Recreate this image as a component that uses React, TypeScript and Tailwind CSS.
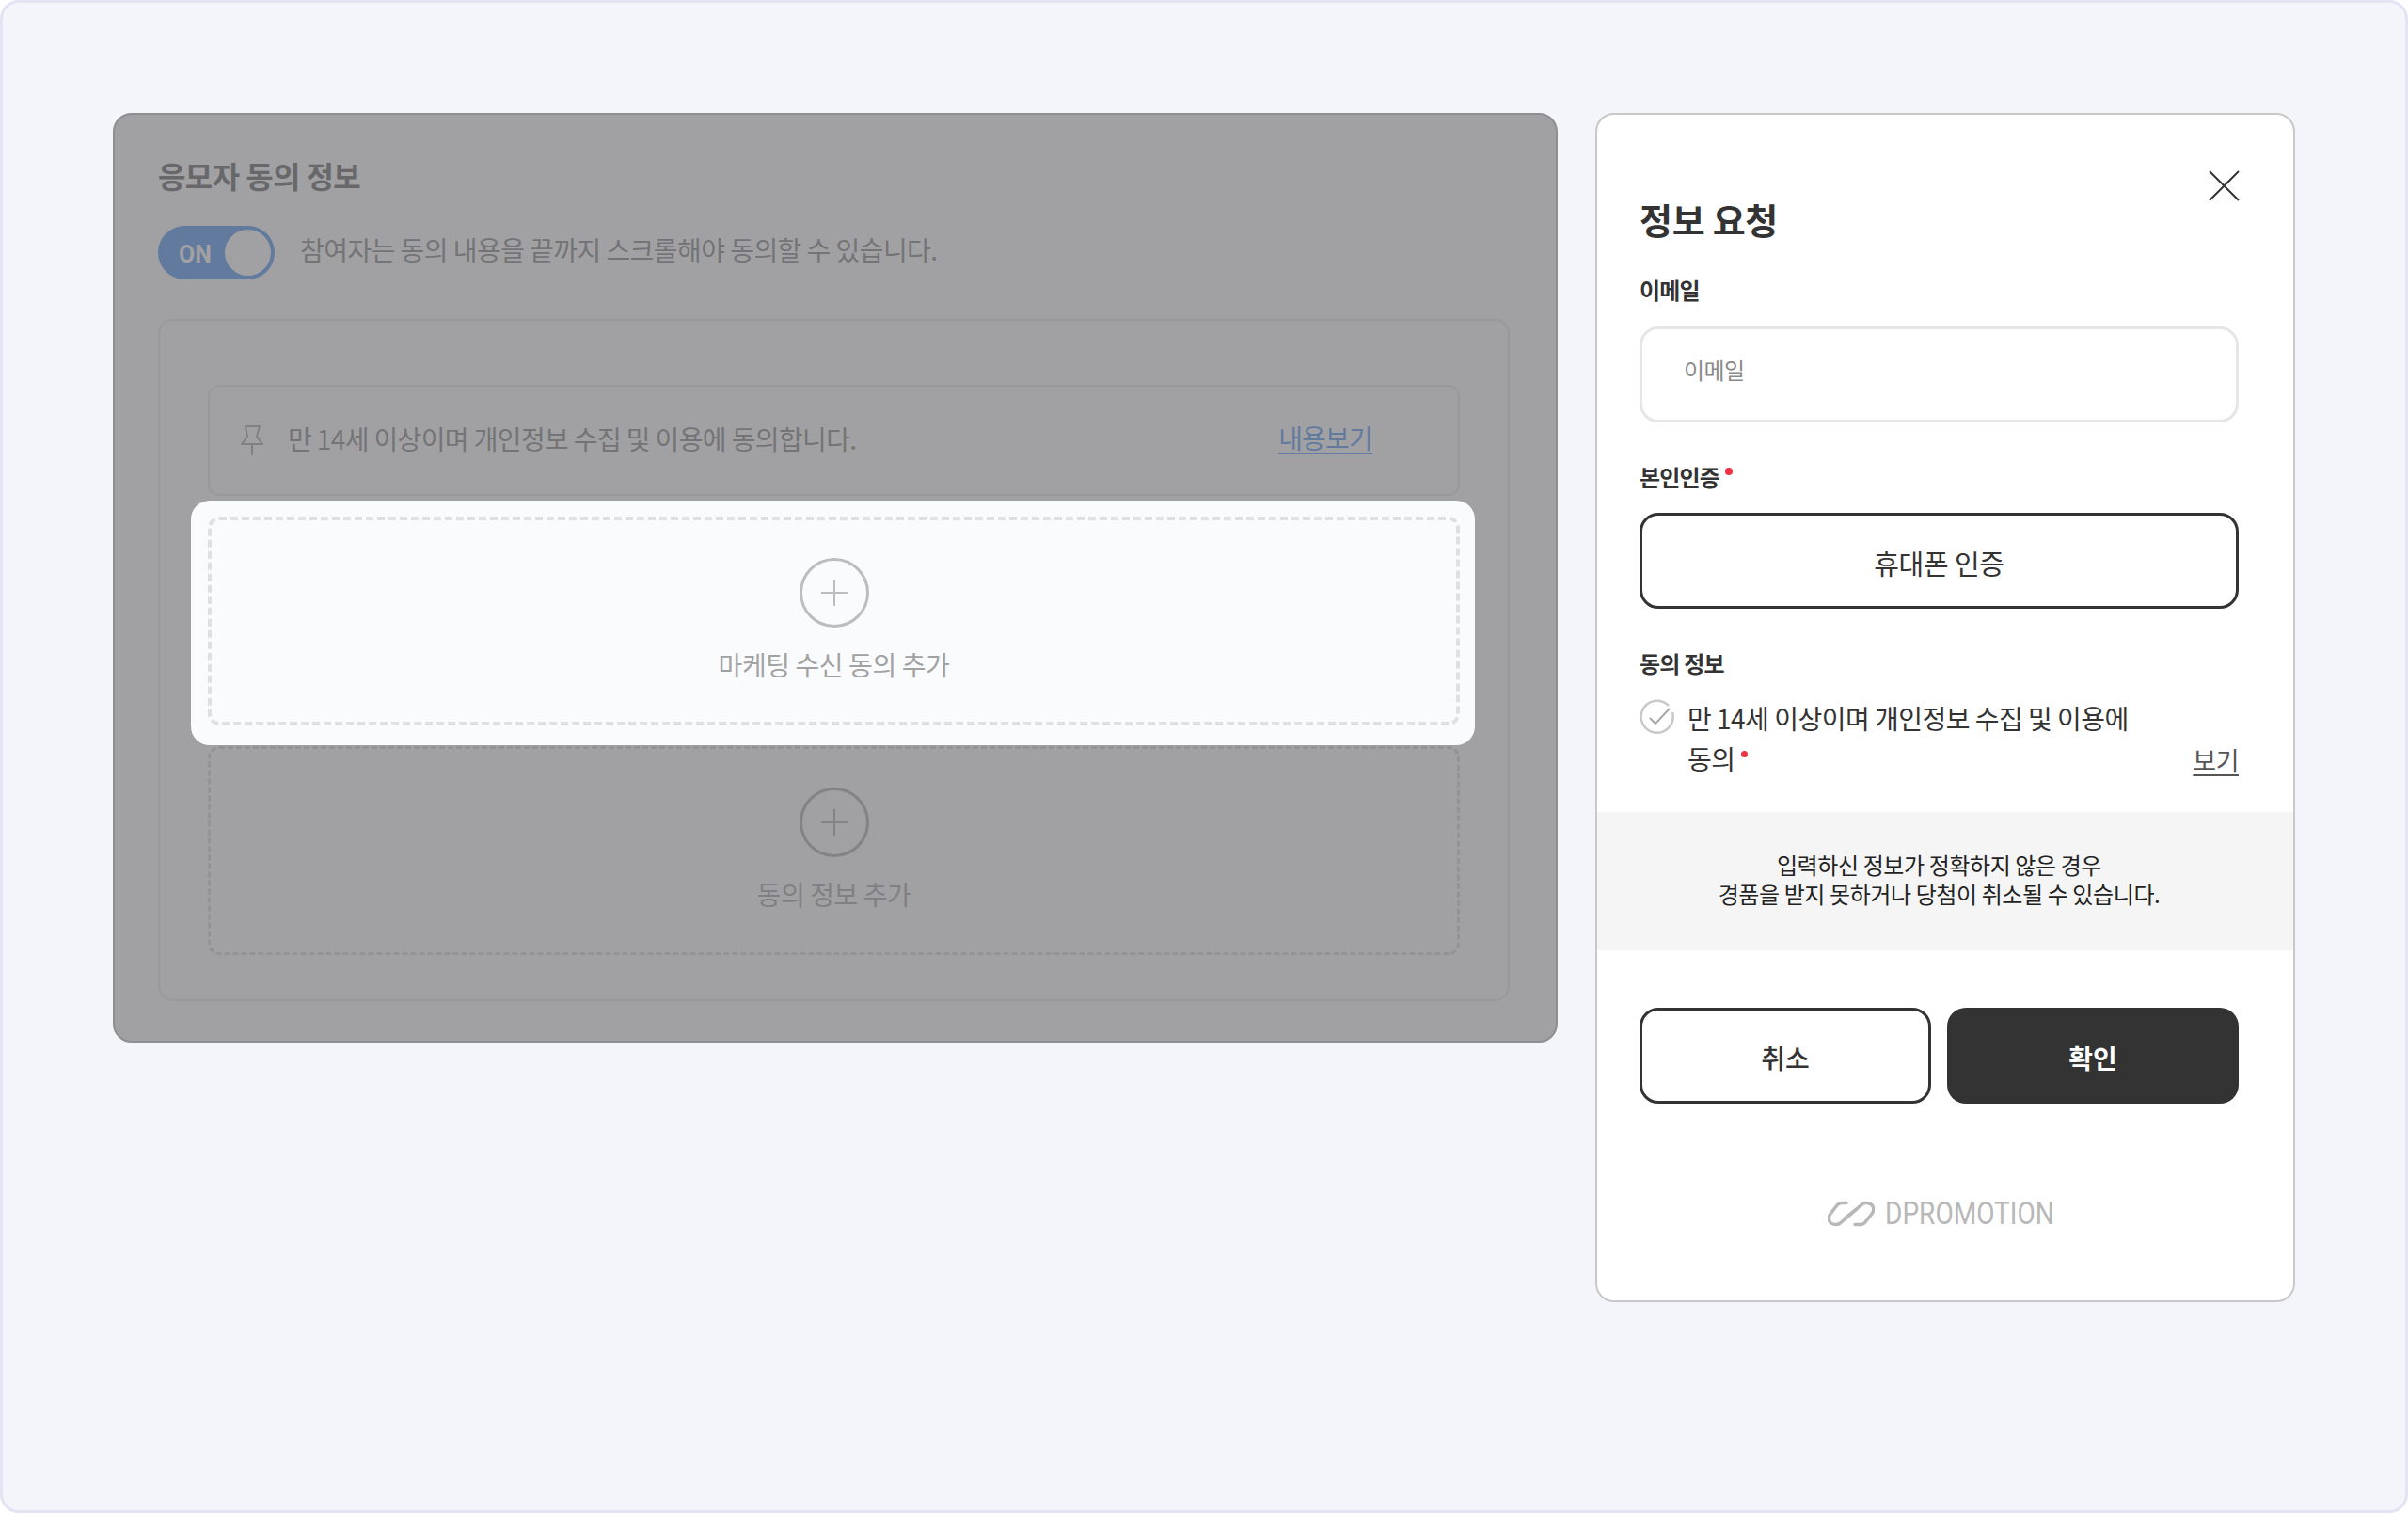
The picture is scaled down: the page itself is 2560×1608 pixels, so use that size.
export default function App() {
  return (
    <div className="box-border flex h-[1608px] w-[2560px] items-start gap-[40px] rounded-[20px] border-[3px] border-[#e2e3f3] bg-[#f3f5fa] pl-[117px] pt-[117px] font-['Noto_Sans_CJK_KR','Noto_Sans',sans-serif]">
      <LeftPanel />
      <RightPanel />
    </div>
  );
}

function AddBox({ label, dim }: { label: string; dim?: boolean }) {
  const stroke = dim ? "#838385" : "#bdbdbd";
  return (
    <div className={dim
      ? "flex h-[222px] flex-col items-center rounded-[12px] border-[3px] border-dashed border-[#939395] pt-[41px]"
      : "relative z-10 flex h-[222px] flex-col items-center rounded-[12px] border-[4px] border-dashed border-[#e0e0e0] pt-[40px]"}>
      <svg width="74" height="74" viewBox="0 0 74 74" fill="none">
        <circle cx="37" cy="37" r="35.5" stroke={stroke} strokeWidth="3" />
        <path d="M37 23V51M23 37H51" stroke={stroke} strokeWidth="2" />
      </svg>
      <span className={dim
        ? "mt-[19px] text-[28px] leading-[40px] tracking-[-0.4px] text-[#808082]"
        : "mt-[19px] text-[28px] leading-[40px] tracking-[-0.4px] text-[#a2a2a2]"}>{label}</span>
    </div>
  );
}

function LeftPanel() {
  return (
    <section className="box-border h-[988px] w-[1536px] shrink-0 rounded-[20px] border-2 border-[#8f8f91] bg-[#a1a1a3] pl-[46px] pr-[49px] pt-[40px]">
      <h2 className="text-[32px] font-bold leading-[48px] tracking-[-0.6px] text-[#68686a]">응모자 동의 정보</h2>
      <div className="mt-[30px] flex h-[57px] items-center gap-[27px]">
        <div className="flex h-[57px] w-[124px] items-center justify-between rounded-full bg-[#637a9f] pl-[22px] pr-[4px]">
          <span className="mt-[4px] font-['Roboto',sans-serif] text-[25px] font-bold text-[#a1a1a3]">ON</span>
          <span className="h-[49px] w-[49px] rounded-full bg-[#a1a1a3]" />
        </div>
        <p className="-mt-[8px] text-[28px] leading-[40px] tracking-[-0.55px] text-[#747476]">참여자는 동의 내용을 끝까지 스크롤해야 동의할 수 있습니다.</p>
      </div>
      <div className="mt-[42px] box-border h-[725px] rounded-[16px] border-2 border-[#99999b] px-[51px] pt-[68px]">
        <div className="box-border flex h-[118px] items-center justify-between rounded-[12px] border-2 border-[#99999b] pl-[33px] pr-[91px]">
          <div className="flex items-center gap-[26px]">
            <svg width="24" height="32" viewBox="0 0 24 32" fill="none" stroke="#808082" strokeWidth="2">
              <path d="M5 1H20L17 12L23 20H1L7 12L5 1Z" strokeLinejoin="round" />
              <path d="M12 20V32" />
            </svg>
            <span className="-mt-[4px] text-[28px] leading-[40px] tracking-[-0.62px] text-[#747476]">만 14세 이상이며 개인정보 수집 및 이용에 동의합니다.</span>
          </div>
          <a className="-mt-[6px] text-[28px] leading-[40px] tracking-[-0.8px] text-[#637a9f] underline underline-offset-[4px]">내용보기</a>
        </div>
        <div className="mt-[22px] flex flex-col gap-[22px]">
          <div className="relative">
            <div className="absolute -bottom-[21px] -left-[18px] -right-[16px] -top-[17px] rounded-[20px] bg-[#fafbfd]" />
            <AddBox label="마케팅 수신 동의 추가" />
          </div>
          <AddBox label="동의 정보 추가" dim />
        </div>
      </div>
    </section>
  );
}

function RightPanel() {
  const label = "text-[24px] font-semibold leading-[36px] tracking-[-0.8px] text-[#333333]";
  const body = "text-[28px] leading-[42px] tracking-[-0.5px] text-[#333333]";
  return (
    <section className="box-border h-[1264px] w-[744px] shrink-0 rounded-[20px] border-2 border-[#c8c8c8] bg-white pt-[59px]">
      <div className="pl-[45px] pr-[58px]">
        <div className="flex items-end justify-between">
          <h2 className="text-[38px] font-bold leading-[50px] tracking-[-0.3px] text-[#333333]">정보 요청</h2>
          <svg className="mb-[44px] -mr-[1px]" width="33" height="33" viewBox="0 0 33 33" fill="none" stroke="#333333" strokeWidth="2">
            <path d="M1 1L32 32M32 1L1 32" />
          </svg>
        </div>
        <div className={`mt-[32px] ${label}`}>이메일</div>
        <div className="mt-[21px] box-border flex h-[102px] items-start rounded-[20px] border-[3px] border-[#e6e6e6] pl-[44px] pt-[23px] text-[24px] leading-[40px] tracking-[-0.6px] text-[#8a8a8a]">이메일</div>
        <div className={`mt-[40px] flex ${label}`}>
          본인인증
          <span className="ml-[6px] mt-[13px] h-[8px] w-[8px] -translate-y-[5px] rounded-full bg-[#ef3340]" />
        </div>
        <button className="mt-[20px] box-border flex h-[102px] w-full items-center justify-center rounded-[20px] border-[3px] border-[#333333] bg-white pt-[5px] text-[29px] tracking-[-0.2px] text-[#333333]">휴대폰 인증</button>
        <div className={`mt-[40px] ${label}`}>동의 정보</div>
        <div className="mt-[19px] flex gap-[14px]">
          <svg className="mt-[1px] shrink-0" width="37" height="37" viewBox="0 0 37 37" fill="none">
            <path d="M31 7A17 17 0 1 0 35 14" stroke="#c8c8c8" strokeWidth="2.5" />
            <path d="M11 20L17 26L32 10" stroke="#a8a8a8" strokeWidth="2" />
          </svg>
          <div className="flex-1">
            <div className={body}>만 14세 이상이며 개인정보 수집 및 이용에</div>
            <div className="flex items-center justify-between">
              <div className={`-mt-[1px] flex ${body}`}>
                동의
                <span className="ml-[6px] mt-[13px] h-[7px] w-[7px] rounded-full bg-[#ef3340]" />
              </div>
              <a className="mt-[3px] text-[27px] leading-[42px] tracking-[-0.5px] text-[#555555] underline underline-offset-[4px]">보기</a>
            </div>
          </div>
        </div>
      </div>
      <div className="mt-[34px] flex h-[147px] flex-col items-center justify-center bg-[#f5f5f5] pb-[6px] pr-[13px] text-[24px] leading-[31px] tracking-[-0.4px] text-[#222222]">
        <p>입력하신 정보가 정확하지 않은 경우</p>
        <p>경품을 받지 못하거나 당첨이 취소될 수 있습니다.</p>
      </div>
      <div className="mt-[61px] grid grid-cols-2 gap-[17px] pl-[45px] pr-[58px]">
        <button className="box-border h-[102px] rounded-[20px] border-[3px] border-[#333333] bg-white pt-[4px] text-[28px] font-medium text-[#333333]">취소</button>
        <button className="box-border h-[102px] rounded-[20px] bg-[#333333] pt-[4px] text-[28px] font-semibold text-white">확인</button>
      </div>
      <div className="mt-[103px] flex h-[28px] items-center pl-[245px]">
        <svg width="50" height="28" viewBox="0 0 50 28" fill="none" stroke="#b8b8b8" strokeWidth="3.5" strokeLinecap="round">
          <path d="M20 2.5H15Q12 2.5 10 5L3 14Q0 18 2 22Q4 25.5 9 25.5Q12 25.5 14 23.5L31 9" />
          <path d="M29 25.5H35Q38 25.5 40 23L47 14Q50 10 48 6Q46 2.5 41 2.5Q38 2.5 36 4.5L18 19" />
        </svg>
        <span className="ml-[11px] w-[178px] origin-left scale-x-[0.85] whitespace-nowrap font-['Roboto',sans-serif] text-[33px] leading-[28px] text-[#b8b8b8]">DPROMOTION</span>
      </div>
    </section>
  );
}
